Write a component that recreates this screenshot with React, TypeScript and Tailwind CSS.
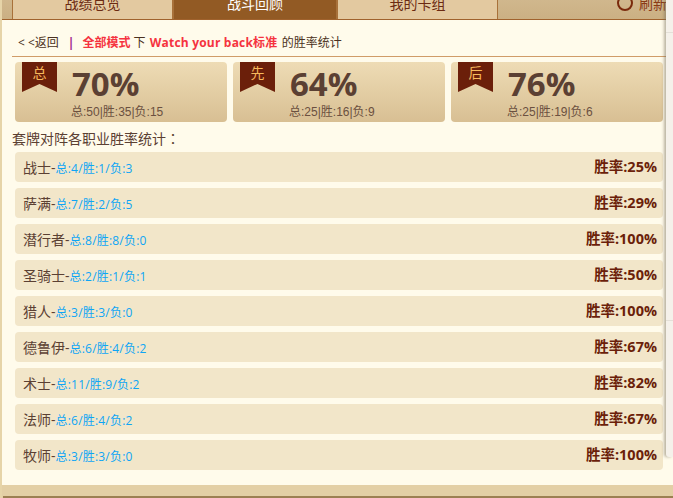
import React from "react";

const font = { fontFamily: '"Open Sans","Noto Sans CJK SC",sans-serif' };

const rows = [
  ["战士", "总:4/胜:1/负:3", "25%"],
  ["萨满", "总:7/胜:2/负:5", "29%"],
  ["潜行者", "总:8/胜:8/负:0", "100%"],
  ["圣骑士", "总:2/胜:1/负:1", "50%"],
  ["猎人", "总:3/胜:3/负:0", "100%"],
  ["德鲁伊", "总:6/胜:4/负:2", "67%"],
  ["术士", "总:11/胜:9/负:2", "82%"],
  ["法师", "总:6/胜:4/负:2", "67%"],
  ["牧师", "总:3/胜:3/负:0", "100%"],
];

const cards = [
  ["总", "70%", "总:50|胜:35|负:15"],
  ["先", "64%", "总:25|胜:16|负:9"],
  ["后", "76%", "总:25|胜:19|负:6"],
];

function Tab({ label, active, w }: { label: string; active?: boolean; w: string }) {
  return (
    <div
      className={`${w} h-[19px] flex justify-center overflow-hidden border-x border-[#a8713a] text-[14px] leading-[18px] ${
        active ? "bg-[#925a24] text-white" : "bg-[#e3c9a0] text-[#6b2a12]"
      }`}
    >
      <span className="-mt-[5px]">{label}</span>
    </div>
  );
}

export default function App() {
  return (
    <div style={font} className="relative w-[673px] h-[498px] overflow-hidden bg-[#fffbeb]">
      <div className="flex h-[20px] border-b border-[#a0622d]">
        <div className="w-[2px] bg-[#e6d4a8]" />
        <div className="flex-1 flex pl-[10px] bg-gradient-to-b from-[#d0b78d] to-[#cbb083]">
          <Tab label="战绩总览" w="w-[161px]" />
          <Tab label="战斗回顾" w="w-[164px]" active />
          <Tab label="我的卡组" w="w-[161px]" />
          <div className="flex-1 flex justify-end items-start overflow-hidden text-[14px] leading-[18px] text-[#8a3a14]">
            <div className="flex items-start gap-[6px] w-[56px] shrink-0 -mt-[5px]">
              <span className="w-[16px] h-[16px] shrink-0 rounded-full border-[2px] border-[#7a2a0c]" />
              <span className="whitespace-nowrap">刷新</span>
            </div>
          </div>
        </div>
      </div>

      <div className="ml-[2px] flex flex-col">
        <div className="ml-[10px] w-[654px] h-[37px] pt-[15px] pl-[6px] border-b border-[#d09c68] text-[12px] leading-[16px] text-[#4a3020] flex items-start whitespace-pre">
          <span>{"< <返回"}</span>
          <span className="ml-[9px] font-bold text-[#a0208a]">|</span>
          <span className="ml-[8px] font-bold text-[#f5333f]">全部模式</span>
          <span> 下 </span>
          <span className="ml-[1px] font-bold tracking-[0.2px] text-[#f5333f]">Watch your back标准</span>
          <span className="ml-[1px]"> 的胜率统计</span>
        </div>

        <div className="flex gap-[6px] ml-[13px] mt-[5px]">
          {cards.map(([tag, pct, detail]) => (
            <div
              key={tag}
              className="w-[212px] h-[60px] rounded-[4px] bg-gradient-to-b from-[#eedcb5] to-[#d8bf93] text-[#5b4033] flex"
            >
              <div className="ml-[7px] w-[35px] h-[30px] text-center text-[14px] leading-[22px] text-[#f7b95c] bg-[#6b1f0a] [clip-path:polygon(0_0,100%_0,100%_100%,50%_73%,0_100%)]">
                {tag}
              </div>
              <div className="ml-[14px] flex flex-col">
                <div className="h-[42px] pt-[4px] pl-[1px] text-[33px] leading-[36px] font-bold">{pct}</div>
                <div
                  style={{ fontFamily: '"Liberation Sans","Noto Sans CJK SC",sans-serif' }}
                  className="h-[16px] text-[12px] leading-[16px] text-[#6b5040]"
                >
                  {detail}
                </div>
              </div>
            </div>
          ))}
        </div>

        <div className="ml-[10px] mt-[7px] h-[18px] text-[14px] leading-[18px] text-[#5b4033]">
          套牌对阵各职业胜率统计<span style={{ fontFamily: '"Noto Sans CJK TC",sans-serif' }}>：</span>
        </div>

        <div className="ml-[13px] mt-[5px] w-[648px] flex flex-col gap-[6px]">
          {rows.map(([name, stats, pct]) => (
            <div
              key={name}
              className="h-[30px] rounded-[4px] bg-[#f2e6c9] pl-[8px] pr-[6px] flex items-center justify-between"
            >
              <div className="pt-[1px] flex items-center text-[14px] leading-[20px] text-[#5b4033]">
                <span>{name}-</span>
                <span className="pt-[2px] text-[12px] tracking-[0.2px] leading-[18px] text-[#0ea5f5]">{stats}</span>
              </div>
              <div className="text-[14.5px] font-bold text-[#6b1f0a]">胜率:{pct}</div>
            </div>
          ))}
        </div>
      </div>

      <div className="absolute left-0 right-0 bottom-0 h-[13px] bg-[#e3cfa5]">
        <div className="absolute left-[3px] right-0 bottom-0 h-[2px] bg-[#9c8052]" />
      </div>
      <div className="absolute left-0 top-0 bottom-0 w-[2px] bg-[#e6d4a8]" />

      <div className="absolute left-[666px] right-0 top-0 h-[457px] rounded-bl-[3px] bg-[#f5f1ea] shadow-[-2px_0_3px_rgba(120,110,90,0.5)]">
        <div className="absolute left-0 right-0 top-[32px] h-px bg-[#e4e0d8]" />
        <div className="absolute left-0 right-0 top-[320px] h-px bg-[#e4e0d8]" />
      </div>
    </div>
  );
}
